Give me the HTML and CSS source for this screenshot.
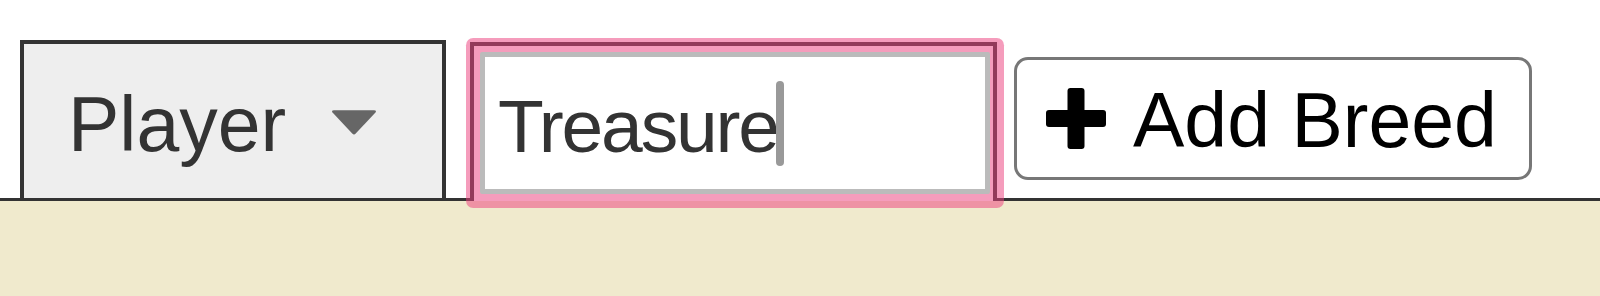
FILE: index.html
```html
<!DOCTYPE html>
<html lang="en">
<head>
<meta charset="utf-8">
<title>Breeds</title>
<link rel="stylesheet" href="styles.css">
</head>
<body>
<header class="tabbar">
  <div class="tab tab-select">
    <span class="tab-label">Player</span>
    <svg class="caret-down" width="46" height="25" viewBox="0 0 45 24" aria-hidden="true">
      <path d="M3 0 H42 Q45 0 43.5 2.2 L24.2 22.8 Q22.5 24.5 20.8 22.8 L1.5 2.2 Q0 0 3 0 Z" fill="#666"/>
    </svg>
  </div>
  <div class="tab tab-active">
    <div class="textbox" role="textbox">Treasure<span class="text-caret"></span></div>
  </div>
  <button class="add-btn" type="button">
    <svg class="plus" width="60" height="61" viewBox="0 0 60 61" aria-hidden="true">
      <rect x="0" y="22" width="60" height="17" rx="3" fill="#000"/>
      <rect x="21.5" y="0" width="17" height="61" rx="3" fill="#000"/>
    </svg>
    <span>Add Breed</span>
  </button>
</header>
<main class="content"></main>
</body>
</html>
```

FILE: styles.css
```css
html, body {
  margin: 0;
  padding: 0;
  background: #fff;
  font-family: "Liberation Sans", Arial, Helvetica, sans-serif;
}

body {
  width: 1600px;
  height: 296px;
  display: flex;
  flex-direction: column;
  overflow: hidden;
}

.tabbar {
  display: flex;
  align-items: flex-end;
  height: 198px;
  padding-left: 20px;
  border-bottom: 3px solid #333;
  flex: none;
}

.tab {
  box-sizing: border-box;
  border: 4px solid #333;
  border-bottom: none;
}

.tab-select {
  width: 426px;
  height: 158px;
  background: #eee;
  display: flex;
  align-items: center;
  padding: 7px 0 0 44px;
  color: #333;
  font-size: 77px;
}

.tab-label {
  line-height: 1.12;
}

.caret-down {
  margin-left: 45px;
  margin-top: -4px;
}

.tab-active {
  position: relative;
  z-index: 1;
  width: 527px;
  height: 159px;
  margin-left: 24px;
  margin-bottom: -3px;
  background: #fff;
  padding: 6px 3px 0 6px;
}

.textbox {
  box-sizing: border-box;
  height: 142px;
  border: 5px solid #bbb;
  background: #fff;
  box-shadow: 0 0 0 14px rgba(236, 66, 126, 0.52);
  border-radius: 2px;
  display: flex;
  align-items: center;
  padding: 6px 0 0 13px;
  font-size: 75px;
  color: #333;
  letter-spacing: -2.2px;
  white-space: nowrap;
}

.text-caret {
  display: inline-block;
  width: 8px;
  height: 85px;
  margin-left: -2px;
  margin-top: -6px;
  background: #999;
  border-radius: 4px;
}

.add-btn {
  box-sizing: border-box;
  margin: 0 0 18px 17px;
  height: 123px;
  padding: 3px 32px 0 29px;
  display: flex;
  align-items: center;
  gap: 27px;
  background: #fff;
  border: 3px solid #777;
  border-radius: 14px;
  font-family: "Liberation Sans", Arial, Helvetica, sans-serif;
  font-size: 77px;
  color: #000;
  line-height: 1.12;
}

.plus {
  flex: none;
  margin-top: -4px;
}

.content {
  flex: 1;
  background: #f0eacd;
}
```
